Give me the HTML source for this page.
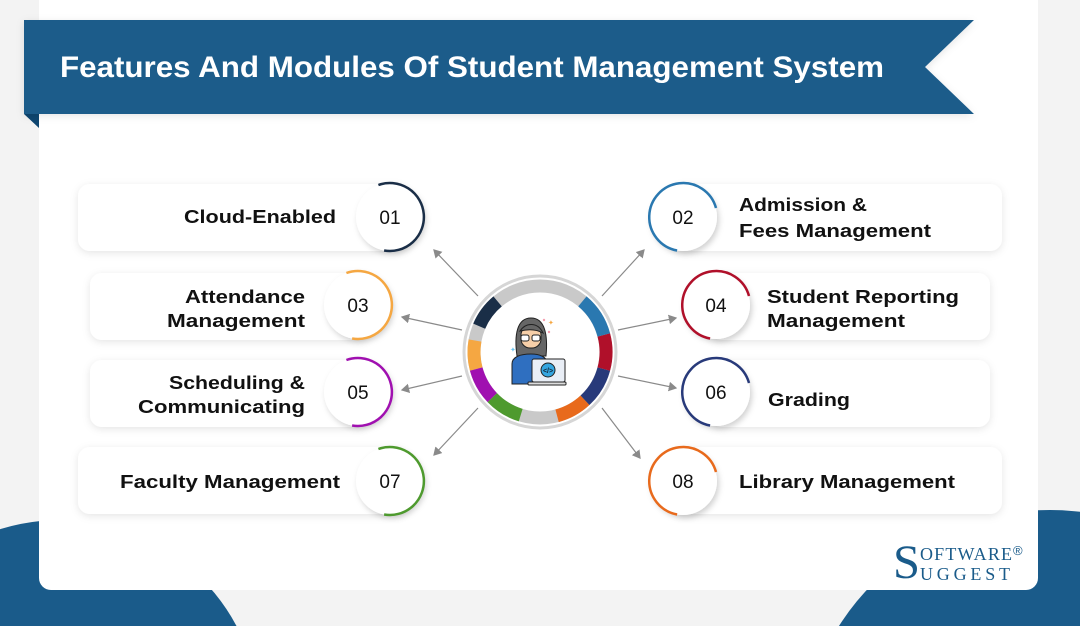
<!DOCTYPE html>
<html><head><meta charset="utf-8"><style>
html,body{margin:0;padding:0;width:1080px;height:626px;overflow:hidden;background:#f3f3f3}
svg{display:block}
</style></head><body>
<svg width="1080" height="626" viewBox="0 0 1080 626" xmlns="http://www.w3.org/2000/svg" style="font-family:'Liberation Sans',sans-serif">
<defs>
<filter id="sh" x="-20%" y="-30%" width="140%" height="160%"><feDropShadow dx="0" dy="2" stdDeviation="4" flood-color="#000" flood-opacity="0.10"/></filter>
<filter id="sh2" x="-30%" y="-30%" width="160%" height="160%"><feDropShadow dx="2" dy="3" stdDeviation="3" flood-color="#000" flood-opacity="0.18"/></filter>
<marker id="ar" markerWidth="8" markerHeight="8" refX="6" refY="4" orient="auto"><path d="M0,0 L7,4 L0,8 z" fill="#8a8a8a"/></marker>
</defs>
<rect width="1080" height="626" fill="#f3f3f3"/>
<circle cx="60" cy="720" r="200" fill="#1a5b8a"/>
<circle cx="1050" cy="760" r="250" fill="#1a5b8a"/>
<path d="M39,0 H1038 V578 a12,12 0 0 1 -12,12 H51 a12,12 0 0 1 -12,-12 Z" fill="#fff"/>
<!-- banner -->
<path d="M24,114 L39,128 L39,114 Z" fill="#0e4670"/>
<path d="M24,20 H974 L925,67 L974,114 H24 Z" fill="#1a5b8a" filter="url(#sh)"/>
<text x="60" y="77" font-size="30" font-weight="bold" fill="#fff" textLength="824" lengthAdjust="spacingAndGlyphs">Features And Modules Of Student Management System</text>
<!-- pills -->
<g filter="url(#sh)" fill="#fff">
<rect x="78" y="184" width="330" height="67" rx="12"/>
<rect x="90" y="273" width="280" height="67" rx="12"/>
<rect x="90" y="360" width="280" height="67" rx="12"/>
<rect x="78" y="447" width="330" height="67" rx="12"/>
<rect x="672" y="184" width="330" height="67" rx="12"/>
<rect x="710" y="273" width="280" height="67" rx="12"/>
<rect x="710" y="360" width="280" height="67" rx="12"/>
<rect x="672" y="447" width="330" height="67" rx="12"/>
</g>
<!-- circles -->
<g filter="url(#sh2)" fill="#fff">
<circle cx="390" cy="217" r="34"/><circle cx="358" cy="305" r="34"/><circle cx="358" cy="392" r="34"/><circle cx="390" cy="481" r="34"/>
<circle cx="683" cy="217" r="34"/><circle cx="716" cy="305" r="34"/><circle cx="716" cy="392" r="34"/><circle cx="683" cy="481" r="34"/>
</g>
<g fill="none" stroke-width="2.5">
<path d="M378.4,185 A34,34 0 1 1 384.1,250.5" stroke="#1a2e47"/>
<path d="M346.4,273 A34,34 0 1 1 352.1,338.5" stroke="#f5a742"/>
<path d="M346.4,360 A34,34 0 1 1 352.1,425.5" stroke="#a010b0"/>
<path d="M378.4,449 A34,34 0 1 1 384.1,514.5" stroke="#4e9a2e"/>
<path d="M716,208 A34,34 0 1 0 677.1,250.5" stroke="#2a78b0"/>
<path d="M749,296 A34,34 0 1 0 710.1,338.5" stroke="#b0102a"/>
<path d="M749,383 A34,34 0 1 0 710.1,425.5" stroke="#283a7a"/>
<path d="M716,472 A34,34 0 1 0 677.1,514.5" stroke="#e86a1c"/>
</g>
<g font-size="19" fill="#111" text-anchor="middle">
<text x="390" y="224">01</text><text x="358" y="312">03</text><text x="358" y="399">05</text><text x="390" y="488">07</text>
<text x="683" y="224">02</text><text x="716" y="312">04</text><text x="716" y="399">06</text><text x="683" y="488">08</text>
</g>
<g font-size="18.5" font-weight="bold" fill="#111">
<text x="336" y="223" text-anchor="end" textLength="152" lengthAdjust="spacingAndGlyphs">Cloud-Enabled</text>
<text x="305" y="303" text-anchor="end" textLength="120" lengthAdjust="spacingAndGlyphs">Attendance</text>
<text x="305" y="327" text-anchor="end" textLength="138" lengthAdjust="spacingAndGlyphs">Management</text>
<text x="305" y="389" text-anchor="end" textLength="136" lengthAdjust="spacingAndGlyphs">Scheduling &amp;</text>
<text x="305" y="413" text-anchor="end" textLength="167" lengthAdjust="spacingAndGlyphs">Communicating</text>
<text x="340" y="488" text-anchor="end" textLength="220" lengthAdjust="spacingAndGlyphs">Faculty Management</text>
<text x="739" y="211" textLength="128" lengthAdjust="spacingAndGlyphs">Admission &amp;</text>
<text x="739" y="237" textLength="192" lengthAdjust="spacingAndGlyphs">Fees Management</text>
<text x="767" y="303" textLength="192" lengthAdjust="spacingAndGlyphs">Student Reporting</text>
<text x="767" y="327" textLength="138" lengthAdjust="spacingAndGlyphs">Management</text>
<text x="768" y="406" textLength="82" lengthAdjust="spacingAndGlyphs">Grading</text>
<text x="739" y="488" textLength="216" lengthAdjust="spacingAndGlyphs">Library Management</text>
</g>
<!-- arrows -->
<g stroke="#8a8a8a" stroke-width="1.2" fill="none" marker-end="url(#ar)">
<line x1="478" y1="296" x2="434" y2="250"/>
<line x1="462" y1="330" x2="402" y2="317"/>
<line x1="462" y1="376" x2="402" y2="390"/>
<line x1="478" y1="408" x2="434" y2="455"/>
<line x1="602" y1="296" x2="644" y2="250"/>
<line x1="618" y1="330" x2="676" y2="318"/>
<line x1="618" y1="376" x2="676" y2="388"/>
<line x1="602" y1="408" x2="640" y2="458"/>
</g>
<!-- center ring -->
<circle cx="540" cy="352" r="76" fill="#fff" stroke="#d6d6d6" stroke-width="3"/>
<circle cx="540" cy="352" r="66" fill="none" stroke="#c9c9c9" stroke-width="13"/>
<g fill="none" stroke-width="13">
<path d="M479.2,326.2 A66,66 0 0 1 497.6,301.4" stroke="#1a2e47"/>
<path d="M475,340.5 A66,66 0 0 0 476.2,369.1" stroke="#f5a742"/>
<path d="M476.2,369.1 A66,66 0 0 0 492.3,397.6" stroke="#a010b0"/>
<path d="M492.3,397.6 A66,66 0 0 0 520.7,415.1" stroke="#4e9a2e"/>
<path d="M557.1,415.8 A66,66 0 0 0 585,400.3" stroke="#e86a1c"/>
<path d="M585,400.3 A66,66 0 0 0 603.8,369.1" stroke="#283a7a"/>
<path d="M603.8,369.1 A66,66 0 0 0 603.8,334.9" stroke="#b0102a"/>
<path d="M603.8,334.9 A66,66 0 0 0 582.4,301.4" stroke="#2a78b0"/>
</g>
<circle cx="540" cy="352" r="59" fill="#fff"/>
<!-- person icon -->
<g stroke="#222" stroke-width="1">
<path d="M517,356 C514,335 517,318 531,318 C545,318 548,335 546,356 Z" fill="#666"/>
<rect x="521" y="326" width="20" height="22" rx="9" fill="#f7cfa8"/>
<path d="M520,331 C526,322 538,322 543,333 C536,329 528,329 520,331Z" fill="#666"/>
<rect x="521" y="335" width="8" height="6" rx="2" fill="#fff"/><rect x="532" y="335" width="8" height="6" rx="2" fill="#fff"/>
<path d="M512,384 V364 C512,357 520,354 531,354 C540,354 546,357 547,362 V384 Z" fill="#2f6fc0"/>
<rect x="532" y="359" width="33" height="23" rx="2" fill="#e9eef6"/>
<rect x="528" y="382" width="38" height="3" rx="1" fill="#ddd"/>
<circle cx="548" cy="370" r="7" fill="#35a6e0"/>
</g>
<text x="548" y="373" font-size="7" font-weight="bold" text-anchor="middle" fill="#123">&lt;/&gt;</text>
<g fill="#f5a0b0"><circle cx="544" cy="320" r="1.2"/><circle cx="549" cy="332" r="1.2"/></g>
<text x="548" y="325" font-size="7" fill="#f5a742">✦</text>
<text x="510" y="352" font-size="7" fill="#6cc5f0">✦</text>
<!-- logo -->
<g fill="#1a5b8a" style="font-family:'Liberation Serif',serif">
<text x="893" y="578" font-size="48" textLength="27" lengthAdjust="spacingAndGlyphs">S</text>
<text x="920" y="560" font-size="18" textLength="92" lengthAdjust="spacing">OFTWARE</text>
<text x="1013" y="555" font-size="13" style="font-family:'Liberation Sans',sans-serif">®</text>
<text x="920" y="580" font-size="18" textLength="90" lengthAdjust="spacing">UGGEST</text>
</g>
</svg>
</body></html>
